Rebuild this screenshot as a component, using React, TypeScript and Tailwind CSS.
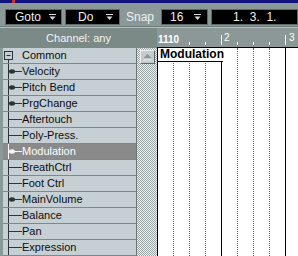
import React from "react";

type Row = { label: string; kind?: "root"; dot?: boolean; active?: boolean };

const rows: Row[] = [
  { label: "Common", kind: "root" },
  { label: "Velocity", dot: true },
  { label: "Pitch Bend", dot: true },
  { label: "PrgChange", dot: true },
  { label: "Aftertouch" },
  { label: "Poly-Press." },
  { label: "Modulation", dot: true, active: true },
  { label: "BreathCtrl" },
  { label: "Foot Ctrl" },
  { label: "MainVolume", dot: true },
  { label: "Balance" },
  { label: "Pan" },
  { label: "Expression" },
];

const gridLines = ["dot", "dot", "dot", "solid", "dot", "dot", "dot", "solid"];

function DropArrow() {
  return (
    <svg width="7" height="7" viewBox="0 0 7 7" className="shrink-0">
      <line x1="0" y1="0.5" x2="7" y2="0.5" stroke="#d8d8d8" />
      <polygon points="0.5,2.5 6.5,2.5 3.5,6" fill="#d8d8d8" />
    </svg>
  );
}

function TreeGlyph({ row }: { row: Row }) {
  const c = row.active ? "#f4f4f4" : "#2c3434";
  if (row.kind === "root") {
    return (
      <svg width="19" height="15" viewBox="0 0 19 15" className="shrink-0">
        <rect x="1.5" y="3.5" width="8" height="8" fill="none" stroke={c} />
        <line x1="3.5" y1="7.5" x2="7.5" y2="7.5" stroke={c} />
        <line x1="5.5" y1="11.5" x2="5.5" y2="15" stroke={c} />
      </svg>
    );
  }
  return (
    <svg width="19" height="15" viewBox="0 0 19 15" className="shrink-0">
      <line x1="5.5" y1="0" x2="5.5" y2="15" stroke={c} />
      <line x1="5.5" y1="7.5" x2="19" y2="7.5" stroke={c} />
      {row.dot && <ellipse cx="9" cy="7.5" rx="3" ry="2.2" fill={c} />}
    </svg>
  );
}

function Toolbar() {
  return (
    <div className="flex h-[23px] items-start bg-[#8a9997] pl-[5px] pt-[6px] text-[12px] leading-none text-[#ececec]">
      <div className="flex h-[16px] w-[57px] items-center justify-between border border-[#5c6a68] bg-black pl-[9px] pr-[5px]">
        <span>Goto</span>
        <DropArrow />
      </div>
      <div className="ml-[3px] flex h-[16px] w-[55px] items-center justify-between border border-[#5c6a68] bg-black pl-[12px] pr-[6px]">
        <span>Do</span>
        <DropArrow />
      </div>
      <div className="ml-[6px] flex h-[16px] items-center text-[#eef2f2]">Snap</div>
      <div className="ml-[7px] flex h-[16px] w-[47px] items-center justify-between border border-[#5c6a68] bg-black pl-[8px] pr-[6px]">
        <span>16</span>
        <DropArrow />
      </div>
      <div className="ml-[3px] flex h-[16px] flex-1 items-center border border-[#5c6a68] bg-black pl-[21px]">
        <span className="whitespace-pre">1.  3.  1.</span>
      </div>
    </div>
  );
}

function ChannelList() {
  return (
    <div className="flex w-[157px] shrink-0 flex-col">
      <div className="flex h-[20px] items-center justify-center bg-[#7b8987] text-[11px] text-[#f4f4f4]">
        Channel: any
      </div>
      <div className="flex flex-1">
        <div className="w-[3px] bg-[#8a9997]" />
        <div className="flex w-[134px] flex-col border-r border-[#6c7878]">
          {rows.map((r) => (
            <div
              key={r.label}
              className={
                "flex h-[16px] shrink-0 items-start border-b border-[#7c8a8a] text-[11px] leading-[15px] " +
                (r.active ? "bg-[#8a8a8a] text-white" : "bg-[#c6d0d4] text-[#0c0c0c]")
              }
            >
              <TreeGlyph row={r} />
              <span className="whitespace-nowrap">{r.label}</span>
            </div>
          ))}
        </div>
        <div className="flex w-[20px] flex-col items-center bg-[image:repeating-conic-gradient(#9ca6a6_0_25%,#eef0f0_0_50%)] bg-[length:2px_2px] pt-[2px]">
          <div className="ml-[1px] flex h-[14px] w-[15px] items-center justify-center border border-t-[#eef2f2] border-l-[#eef2f2] border-r-[#5c6666] border-b-[#5c6666] bg-[#c4cccc]">
            <svg width="9" height="7" viewBox="0 0 9 7">
              <polygon points="0.5,4 8.5,4 4.5,0" fill="#8a9494" />
              <line x1="0.5" y1="6" x2="8.5" y2="6" stroke="#eef2f2" />
            </svg>
          </div>
        </div>
      </div>
    </div>
  );
}

function Ruler() {
  return (
    <div className="flex h-[20px] border-b border-black bg-[#8c9797] pb-[2px] pl-[1px] text-white">
      {gridLines.map((g, i) => (
        <div key={i} className="flex h-full w-[16px] shrink-0 justify-between">
          <span className="mt-[7px] whitespace-nowrap text-[10px] font-bold leading-none">
            {i === 0 ? "1110" : ""}
          </span>
          {i === 4 && <span className="-mt-0 ml-[2px] mr-auto pt-[5px] text-[10px] leading-none">2</span>}
          {i > 0 && <div className={"self-end w-px bg-white " + (g === "solid" ? "h-[10px]" : "h-[3px]")} />}
        </div>
      ))}
      <div className="flex h-full">
        <span className="ml-[3px] pt-[5px] text-[10px] leading-none">3</span>
      </div>
    </div>
  );
}

function Canvas() {
  return (
    <div className="relative flex flex-1 border-l border-black bg-white">
      {gridLines.map((g, i) => (
        <div
          key={i}
          className={
            "h-full w-[16px] shrink-0 border-r " +
            (g === "solid" ? "border-solid border-black" : "border-dotted border-[#6a6a6a]")
          }
        />
      ))}
      <div className="absolute left-0 top-0 h-[14px] w-[65px] border-b border-black bg-white pl-[2px] text-[12px] font-bold leading-[13px] text-black">
        Modulation
      </div>
    </div>
  );
}

export default function App() {
  return (
    <div className="flex h-[256px] w-[298px] flex-col overflow-hidden bg-[#8a9997] font-['Liberation_Sans',Arial,sans-serif]">
      <div className="flex h-[3px] bg-[#12127e]">
        <div className="ml-[12px] h-[3px] w-[3px] bg-[#c83030]" />
      </div>
      <Toolbar />
      <div className="h-px bg-[#6e7c7a]" />
      <div className="h-px bg-[#b4c0be]" />
      <div className="flex flex-1">
        <ChannelList />
        <div className="flex flex-1 flex-col">
          <Ruler />
          <Canvas />
        </div>
      </div>
    </div>
  );
}
